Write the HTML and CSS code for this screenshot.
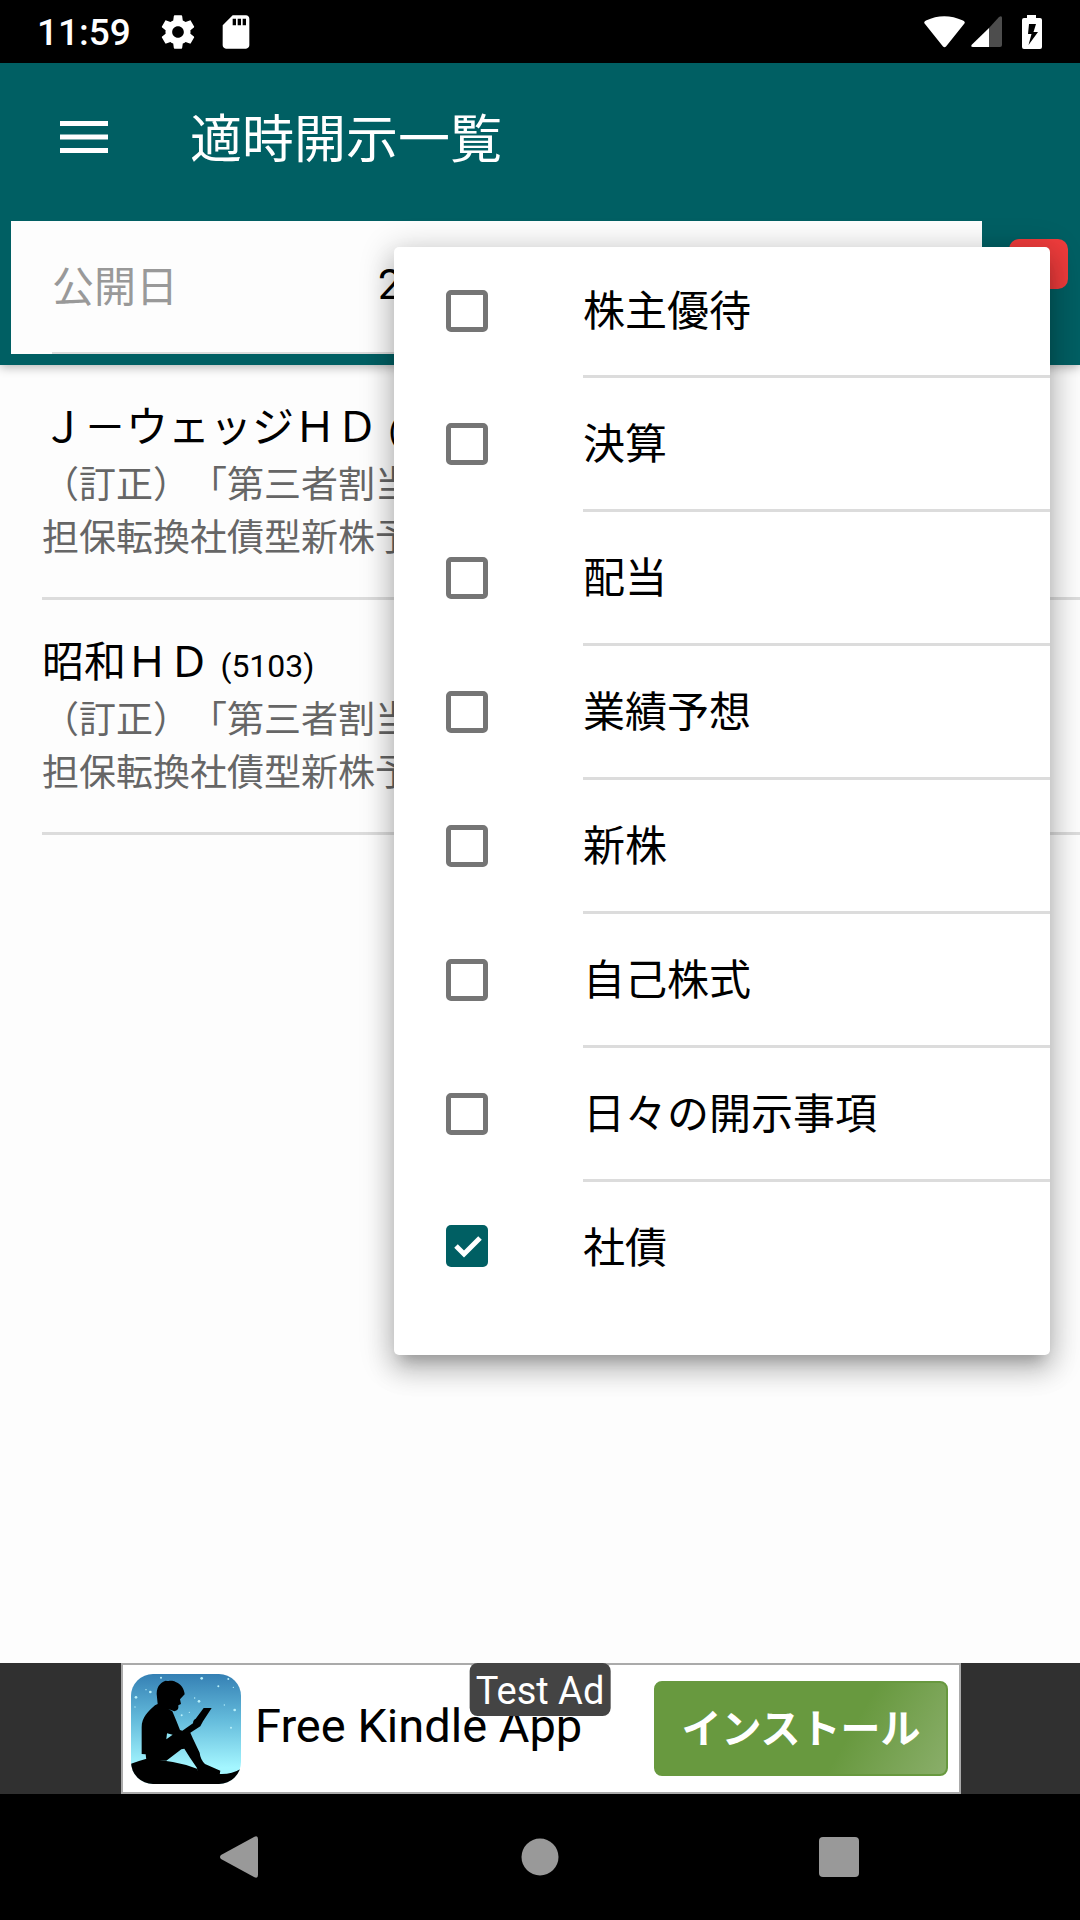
FILE: index.html
```
<!DOCTYPE html>
<html lang="ja">
<head>
<meta charset="utf-8">
<meta name="viewport" content="width=device-width, initial-scale=1">
<title>適時開示一覧</title>
<link rel="stylesheet" href="styles.css">
</head>

<body>
<div class="status">
	<span class="time">11:59</span>
	<svg class="status-icon" viewBox="0 0 24 24"><path d="M19.43 12.98c.04-.32.07-.64.07-.98s-.03-.66-.07-.98l2.11-1.65c.19-.15.24-.42.12-.64l-2-3.46c-.12-.22-.39-.3-.61-.22l-2.49 1c-.52-.4-1.08-.73-1.69-.98l-.38-2.65C14.46 2.18 14.25 2 14 2h-4c-.25 0-.46.18-.49.42l-.38 2.65c-.61.25-1.17.59-1.69.98l-2.49-1c-.23-.09-.49 0-.61.22l-2 3.46c-.13.22-.07.49.12.64l2.11 1.65c-.04.32-.07.65-.07.98s.03.66.07.98l-2.11 1.65c-.19.15-.24.42-.12.64l2 3.46c.12.22.39.3.61.22l2.49-1c.52.4 1.08.73 1.69.98l.38 2.65c.03.24.24.42.49.42h4c.25 0 .46-.18.49-.42l.38-2.65c.61-.25 1.17-.59 1.69-.98l2.49 1c.23.09.49 0 .61-.22l2-3.46c.12-.22.07-.49-.12-.64l-2.11-1.65zM12 15.5c-1.93 0-3.5-1.57-3.5-3.5s1.57-3.5 3.5-3.5 3.5 1.57 3.5 3.5-1.57 3.5-3.5 3.5z"/></svg>
	<svg class="status-icon" viewBox="0 0 24 24"><path d="M18 2h-8L4.02 8 4 20c0 1.1.9 2 2 2h12c1.1 0 2-.9 2-2V4c0-1.1-.9-2-2-2zm-6 6h-2V4h2v4zm3 0h-2V4h2v4zm3 0h-2V4h2v4z"/></svg>
	<div class="status-right">
		<svg class="wifi" viewBox="0 0 41 32"><path d="M1 8Q-1 6 2 4.500Q20 -4 39 4.500Q42 6 40 8L22 30.500Q20.500 32 19 30.500Z"/></svg>
		<svg class="signal" viewBox="0 0 31 31"><path d="M18 12V31H2Q-1 31 1 28.500Z"/><path class="weak" d="M18 12L28 1Q31 -1 31 2V29Q31 31 29 31H18Z"/></svg>
		<svg class="battery" viewBox="0 0 20 34"><path fill-rule="evenodd" d="M5 0H14V3H18Q20 3 20 5V32Q20 34 18 34H2Q0 34 0 32V5Q0 3 2 3H5ZM7 9L6 19H9.500L6.500 30L16 17H11.500L14 9Z"/></svg>
	</div>
</div>

<header class="header">
	<div class="toolbar">
		<button class="menu-btn" type="button" aria-label="メニュー"><svg viewBox="0 0 48 32"><path d="M0 0h48v5H0zM0 13.500h48v5H0zM0 27h48v5H0z"/></svg></button>
		<h1>適時開示一覧</h1>
	</div>
	<div class="filter">
		<div class="date">
			<label for="date">公開日</label>
			<input id="date" type="text" value="2">
		</div>
		<button class="filter-btn" type="button" aria-label="絞り込み"></button>
	</div>
</header>

<main class="content">
	<ul class="list">
		<li>
			<h2>Ｊ－ウェッジＨＤ <small>(</small></h2>
			<p>（訂正）「第三者割当<br>担保転換社債型新株予</p>
		</li>
		<li>
			<h2>昭和ＨＤ <small>(5103)</small></h2>
			<p>（訂正）「第三者割当<br>担保転換社債型新株予</p>
		</li>
	</ul>
</main>

<!-- 広告 -->
<div class="ad">
	<div class="ad-box">
		<svg class="ad-icon" viewBox="0 0 330 330">
			<defs>
				<linearGradient id="sky" x1="0" y1="0" x2="0" y2="1">
					<stop offset="0" stop-color="#3580b4"/>
					<stop offset=".4" stop-color="#62b9da"/>
					<stop offset=".85" stop-color="#a4f6ff"/>
				</linearGradient>
				<clipPath id="round"><rect width="330" height="330" rx="66"/></clipPath>
			</defs>
			<g clip-path="url(#round)">
				<rect width="330" height="330" fill="url(#sky)"/>
				<g fill="#b9f0fa">
					<circle cx="90" cy="11" r="3"/><circle cx="58" cy="54" r="4"/><circle cx="15" cy="70" r="4"/><circle cx="45" cy="47" r="2"/>
					<circle cx="212" cy="13" r="4"/><circle cx="292" cy="15" r="3"/><circle cx="262" cy="37" r="3"/><circle cx="307" cy="40" r="2"/>
					<circle cx="204" cy="82" r="4"/><circle cx="191" cy="72" r="2"/><circle cx="311" cy="108" r="4"/><circle cx="280" cy="93" r="2"/>
					<circle cx="152" cy="124" r="3"/><circle cx="300" cy="161" r="3"/><circle cx="12" cy="99" r="2"/><circle cx="175" cy="115" r="2"/>
				</g>
				<path d="M77 60C77 32 94 24 104 20C116 22 124 18 134 24C148 28 160 44 161 61L147 76L150 90L142 94Q144 110 130 112L112 105L124 112Q136 140 147 168L154 170L186 148Q186 137 194 134L218 102H242L216 142L208 157L178 176L186 194L206 236Q208 256 222 270L268 290L266 302H200L198 282L176 250L160 224L151 226L106 260L46 258L44 241L32 240V160C32 130 52 112 72 94L80 90Z"/>
				<path d="M0 269Q26 260 44 255Q130 258 198 284L200 290L266 300Q300 302 330 284V330H0Z"/>
				<path d="M108 178L125 182L106 196Z" fill="#8fe5f5"/>
			</g>
		</svg>
		<span class="ad-text">Free Kindle App</span>
		<button class="install" type="button">インストール</button>
	</div>
	<span class="ad-label">Test Ad</span>
</div>

<nav class="navbar">
	<button type="button" aria-label="戻る"><svg viewBox="0 0 42 42"><path d="M2 19L35 1Q39 -1 39 3V39Q39 43 35 41L2 23Q0 21 2 19Z"/></svg></button>
	<button type="button" aria-label="ホーム"><svg viewBox="0 0 42 42"><circle cx="21" cy="21" r="18.500"/></svg></button>
	<button type="button" aria-label="履歴"><svg viewBox="0 0 42 42"><rect x="0" y="1" width="40" height="40" rx="4"/></svg></button>
</nav>

<!-- 絞り込みメニュー -->
<div class="popover">
	<label><input type="checkbox"><span>株主優待</span></label>
	<label><input type="checkbox"><span>決算</span></label>
	<label><input type="checkbox"><span>配当</span></label>
	<label><input type="checkbox"><span>業績予想</span></label>
	<label><input type="checkbox"><span>新株</span></label>
	<label><input type="checkbox"><span>自己株式</span></label>
	<label><input type="checkbox"><span>日々の開示事項</span></label>
	<label><input type="checkbox" checked><span>社債</span></label>
</div>
</body>
</html>
```

FILE: styles.css
```
*{ margin:0; padding:0; box-sizing:border-box;}
body{ position:relative; display:flex; flex-direction:column; min-height:100vh; background:#fdfdfd; color:#000; font-family:Roboto,"Noto Sans CJK JP",sans-serif; font-size:42px; text-spacing-trim:space-all;}
ul{ list-style:none;}
h1,h2{ font-weight:400;}
button{ border:0; background:none; font-family:inherit;}
svg{ display:block;}

/* ステータスバー */
.status{ display:flex; align-items:center; gap:18px; height:63px; padding:0 38px 0 37px; background:#000; color:#fff;}
.status svg{ fill:#fff;}
.time{ margin-right:9px; padding-top:2px; font-size:37px; font-weight:500;}
.status-icon{ width:40px; height:40px;}
.status-right{ display:flex; align-items:center; gap:6px; margin-left:auto;}
.wifi{ width:41px; height:32px;}
.signal{ width:31px; height:31px;}
.signal .weak{ fill:#4d4d4d;}
.battery{ width:20px; height:34px; margin-left:14px;}

/* ヘッダー */
.header{ padding-bottom:11px; background:#005f63; box-shadow:0 2px 10px rgba(0,0,0,.3);}
.toolbar{ display:flex; align-items:center; gap:82px; height:147px; padding:0 60px;}
.toolbar h1{ padding-top:8px; color:#fff; font-size:52px; line-height:60px;}
.menu-btn svg{ width:48px; height:32px; fill:#fff;}
.filter{ display:flex; align-items:flex-start; gap:27px; padding:11px 12px 0 11px;}
.date{ flex:1; display:flex; height:133px; padding-left:41px; background:#fdfdfd;}
.date label{ flex:none; width:326px; padding-top:2px; border-bottom:2px solid #dcdcdc; color:#999; line-height:129px;}
.date input{ flex:1; min-width:0; padding-bottom:4px; border:0; border-bottom:2px solid #dcdcdc; background:none; color:#000; font:inherit;}
.filter-btn{ width:59px; height:50px; margin-top:18px; border-radius:10px; background:#ef3c3c;}

/* 一覧 */
.content{ flex:1;}
.list li{ margin-left:42px; padding:35px 0 32px; border-bottom:3px solid #dcdcdc;}
.list h2{ font-size:42px; line-height:56px;}
.list small{ font-size:32px;}
.list p{ color:#666; font-size:37px; line-height:53px;}

/* 広告 */
.ad{ position:relative; display:flex; justify-content:center; padding-left:2px; background:#303030;}
.ad-box{ display:flex; align-items:center; width:840px; height:131px; padding:0 11px 0 8px; border:2px solid #aaa; background:#fff;}
.ad-icon{ width:110px; height:110px;}
.ad-text{ margin-left:14px; padding-bottom:6px; font-size:47px;}
.install{ width:294px; height:95px; margin-left:auto; padding-bottom:6px; border:2px solid #68993f; border-radius:8px; background:linear-gradient(120deg,#68993f 65%,#8aae6a); color:#fff; font-size:40px; font-weight:700;}
.ad-label{ position:absolute; top:0; left:50%; transform:translateX(-50%); padding:4px 6px 0; border-radius:8px; background:#444; color:#fff; font-size:38px; line-height:49px; white-space:nowrap;}

.navbar{ display:grid; grid-template-columns:repeat(3,1fr); height:126px; padding:0 90px; background:#000;}
.navbar button{ display:flex; align-items:center; justify-content:center;}
.navbar svg{ width:42px; height:42px; fill:#999;}

/* 絞り込みメニュー */
.popover{ position:absolute; top:247px; right:30px; width:656px; padding-bottom:42px; border-radius:5px; background:#fff; box-shadow:0 13px 13px -8px rgba(0,0,0,.2),0 16px 26px 3px rgba(0,0,0,.12),0 6px 32px 4px rgba(0,0,0,.2);}
.popover label{ display:flex; align-items:center; padding-left:52px;}
.popover input{ appearance:none; flex:none; width:42px; height:42px; margin:0 95px 3px 0; border:5px solid #757575; border-radius:5px;}
.popover input:checked{ border:0; background:#005f63 url("data:image/svg+xml,%3Csvg xmlns='http://www.w3.org/2000/svg' viewBox='0 0 42 42'%3E%3Cpath d='M10 21l8 8 16-16' fill='none' stroke='white' stroke-width='5'/%3E%3C/svg%3E");}
.popover span{ flex:1; padding-top:2px; line-height:129px; border-bottom:3px solid #dcdcdc;}
.popover label:first-child span{ line-height:126px;}
.popover label:last-child span{ border-bottom:0;}
```
